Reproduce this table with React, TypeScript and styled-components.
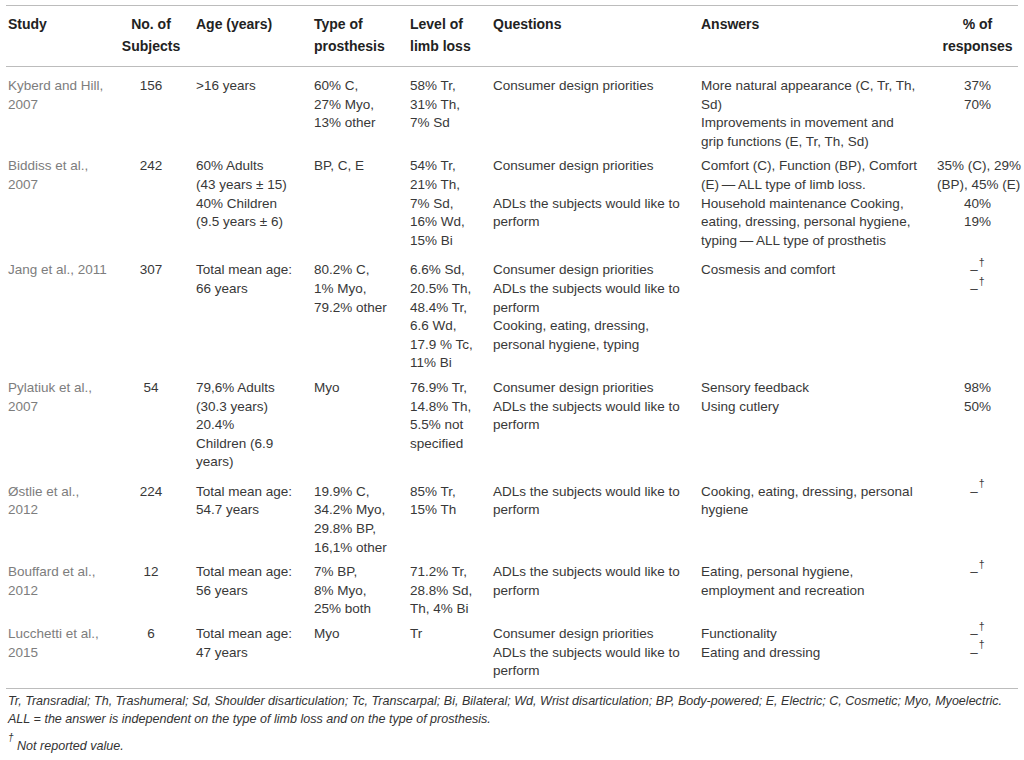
import React from "react";
import styled, { createGlobalStyle } from "styled-components";

const Global = createGlobalStyle`
  html, body { margin: 0; padding: 0; background: #ffffff; }
  body { font-family: "Liberation Sans", Arial, Helvetica, sans-serif; }
`;

const Page = styled.div`
  padding: 5px 6px 0 6px;
  width: 1012px;
`;

const Table = styled.table`
  width: 1012px;
  table-layout: fixed;
  border-collapse: collapse;
  border-top: 1px solid #bcbcbc;
  border-bottom: 1px solid #bcbcbc;
  font-size: 13.5px;
`;

const HeadCell = styled.th<{ $center?: boolean; $first?: boolean; $edge?: boolean }>`
  font-weight: bold;
  font-size: 14px;
  color: #222222;
  line-height: 22px;
  vertical-align: top;
  text-align: ${(p) => (p.$center ? "center" : "left")};
  padding: 7px ${(p) => (p.$center && !p.$edge ? "12px" : "0")} 9px ${(p) => (p.$first ? "2px" : "0")};
  border-bottom: 1px solid #bcbcbc;
`;

const Cell = styled.td<{
  $center?: boolean;
  $first?: boolean;
  $muted?: boolean;
  $edge?: boolean;
  $top: number;
  $bottom: number;
}>`
  color: ${(p) => (p.$muted ? "#7d7d7d" : "#383838")};
  line-height: 18.6px;
  vertical-align: top;
  white-space: nowrap;
  text-align: ${(p) => (p.$center ? "center" : "left")};
  padding: ${(p) => p.$top}px ${(p) => (p.$center && !p.$edge ? "12px" : "0")} ${(p) => p.$bottom}px
    ${(p) => (p.$first ? "2px" : "0")};
`;

const Line = styled.div`
  min-height: 18.6px;
`;

const Dag = styled.sup`
  font-size: 10.5px;
  line-height: 0;
  vertical-align: 0.8em;
  margin-left: 1px;
`;

const Notes = styled.div`
  padding: 3px 0 0 2px;
  font-style: italic;
  font-size: 12.55px;
  line-height: 18.6px;
  color: #333333;
  white-space: nowrap;
`;

const NoteDag = styled.sup`
  font-size: 10px;
  line-height: 0;
  vertical-align: 0.9em;
`;

const NoteLast = styled.div`
  margin-top: 8px;
`;

type Row = {
  study: string[];
  n: string;
  age: string[];
  type: string[];
  level: string[];
  questions: string[];
  answers: string[];
  pct: string[];
  extra?: number;
};

const rows: Row[] = [
  {
    study: ["Kyberd and Hill,", "2007"],
    n: "156",
    age: [">16 years"],
    type: ["60% C,", "27% Myo,", "13% other"],
    level: ["58% Tr,", "31% Th,", "7% Sd"],
    questions: ["Consumer design priorities"],
    answers: ["More natural appearance (C, Tr, Th,", "Sd)", "Improvements in movement and", "grip functions (E, Tr, Th, Sd)"],
    pct: ["37%", "70%"],
  },
  {
    study: ["Biddiss et al.,", "2007"],
    n: "242",
    age: ["60% Adults", "(43 years ± 15)", "40% Children", "(9.5 years ± 6)"],
    type: ["BP, C, E"],
    level: ["54% Tr,", "21% Th,", "7% Sd,", "16% Wd,", "15% Bi"],
    questions: ["Consumer design priorities", "", "ADLs the subjects would like to", "perform"],
    answers: [
      "Comfort (C), Function (BP), Comfort",
      "(E)\u2009\u2014\u2009ALL type of limb loss.",
      "Household maintenance Cooking,",
      "eating, dressing, personal hygiene,",
      "typing\u2009\u2014\u2009ALL type of prosthetis",
    ],
    pct: ["35% (C), 29%", "(BP), 45% (E)", "40%", "19%"],
    extra: 5,
  },
  {
    study: ["Jang et al., 2011"],
    n: "307",
    age: ["Total mean age:", "66 years"],
    type: ["80.2% C,", "1% Myo,", "79.2% other"],
    level: ["6.6% Sd,", "20.5% Th,", "48.4% Tr,", "6.6 Wd,", "17.9 % Tc,", "11% Bi"],
    questions: [
      "Consumer design priorities",
      "ADLs the subjects would like to",
      "perform",
      "Cooking, eating, dressing,",
      "personal hygiene, typing",
    ],
    answers: ["Cosmesis and comfort"],
    pct: ["–†", "–†"],
  },
  {
    study: ["Pylatiuk et al.,", "2007"],
    n: "54",
    age: ["79,6% Adults", "(30.3 years)", "20.4%", "Children (6.9", "years)"],
    type: ["Myo"],
    level: ["76.9% Tr,", "14.8% Th,", "5.5% not", "specified"],
    questions: ["Consumer design priorities", "ADLs the subjects would like to", "perform"],
    answers: ["Sensory feedback", "Using cutlery"],
    pct: ["98%", "50%"],
    extra: 5,
  },
  {
    study: ["Østlie et al.,", "2012"],
    n: "224",
    age: ["Total mean age:", "54.7 years"],
    type: ["19.9% C,", "34.2% Myo,", "29.8% BP,", "16,1% other"],
    level: ["85% Tr,", "15% Th"],
    questions: ["ADLs the subjects would like to", "perform"],
    answers: ["Cooking, eating, dressing, personal", "hygiene"],
    pct: ["–†"],
  },
  {
    study: ["Bouffard et al.,", "2012"],
    n: "12",
    age: ["Total mean age:", "56 years"],
    type: ["7% BP,", "8% Myo,", "25% both"],
    level: ["71.2% Tr,", "28.8% Sd,", "Th, 4% Bi"],
    questions: ["ADLs the subjects would like to", "perform"],
    answers: ["Eating, personal hygiene,", "employment and recreation"],
    pct: ["–†"],
  },
  {
    study: ["Lucchetti et al.,", "2015"],
    n: "6",
    age: ["Total mean age:", "47 years"],
    type: ["Myo"],
    level: ["Tr"],
    questions: ["Consumer design priorities", "ADLs the subjects would like to", "perform"],
    answers: ["Functionality", "Eating and dressing"],
    pct: ["–†", "–†"],
    extra: 4,
  },
];

function renderLine(text: string, i: number) {
  if (text.includes("†")) {
    const parts = text.split("†");
    return (
      <Line key={i}>
        {parts[0]}
        <Dag>†</Dag>
        {parts[1]}
      </Line>
    );
  }
  return <Line key={i}>{text === "" ? "\u00a0" : text}</Line>;
}

const Lines = ({ items }: { items: string[] }) => <>{items.map(renderLine)}</>;

export default function App() {
  return (
    <>
      <Global />
      <Page>
        <Table>
          <colgroup>
            <col style={{ width: 112 }} />
            <col style={{ width: 78 }} />
            <col style={{ width: 118 }} />
            <col style={{ width: 96 }} />
            <col style={{ width: 83 }} />
            <col style={{ width: 208 }} />
            <col style={{ width: 236 }} />
            <col style={{ width: 81 }} />
          </colgroup>
          <thead>
            <tr>
              <HeadCell $first>Study</HeadCell>
              <HeadCell $center>
                No. of
                <br />
                Subjects
              </HeadCell>
              <HeadCell>Age (years)</HeadCell>
              <HeadCell>
                Type of
                <br />
                prosthesis
              </HeadCell>
              <HeadCell>
                Level of
                <br />
                limb loss
              </HeadCell>
              <HeadCell>Questions</HeadCell>
              <HeadCell>Answers</HeadCell>
              <HeadCell $center $edge>
                % of
                <br />
                responses
              </HeadCell>
            </tr>
          </thead>
          <tbody>
            {rows.map((r, idx) => {
              const top = idx === 0 ? 10 : 3;
              const bottom = 3 + (r.extra ?? 0);
              const c = { $top: top, $bottom: bottom };
              return (
                <tr key={idx}>
                  <Cell {...c} $first $muted>
                    <Lines items={r.study} />
                  </Cell>
                  <Cell {...c} $center>
                    <Line>{r.n}</Line>
                  </Cell>
                  <Cell {...c}>
                    <Lines items={r.age} />
                  </Cell>
                  <Cell {...c}>
                    <Lines items={r.type} />
                  </Cell>
                  <Cell {...c}>
                    <Lines items={r.level} />
                  </Cell>
                  <Cell {...c}>
                    <Lines items={r.questions} />
                  </Cell>
                  <Cell {...c}>
                    <Lines items={r.answers} />
                  </Cell>
                  <Cell {...c} $center $edge>
                    <Lines items={r.pct} />
                  </Cell>
                </tr>
              );
            })}
          </tbody>
        </Table>
        <Notes>
          <div>
            Tr, Transradial; Th, Trashumeral; Sd, Shoulder disarticulation; Tc, Transcarpal; Bi, Bilateral; Wd, Wrist
            disarticulation; BP, Body-powered; E, Electric; C, Cosmetic; Myo, Myoelectric.
          </div>
          <div>ALL = the answer is independent on the type of limb loss and on the type of prosthesis.</div>
          <NoteLast>
            <NoteDag>†</NoteDag> Not reported value.
          </NoteLast>
        </Notes>
      </Page>
    </>
  );
}
